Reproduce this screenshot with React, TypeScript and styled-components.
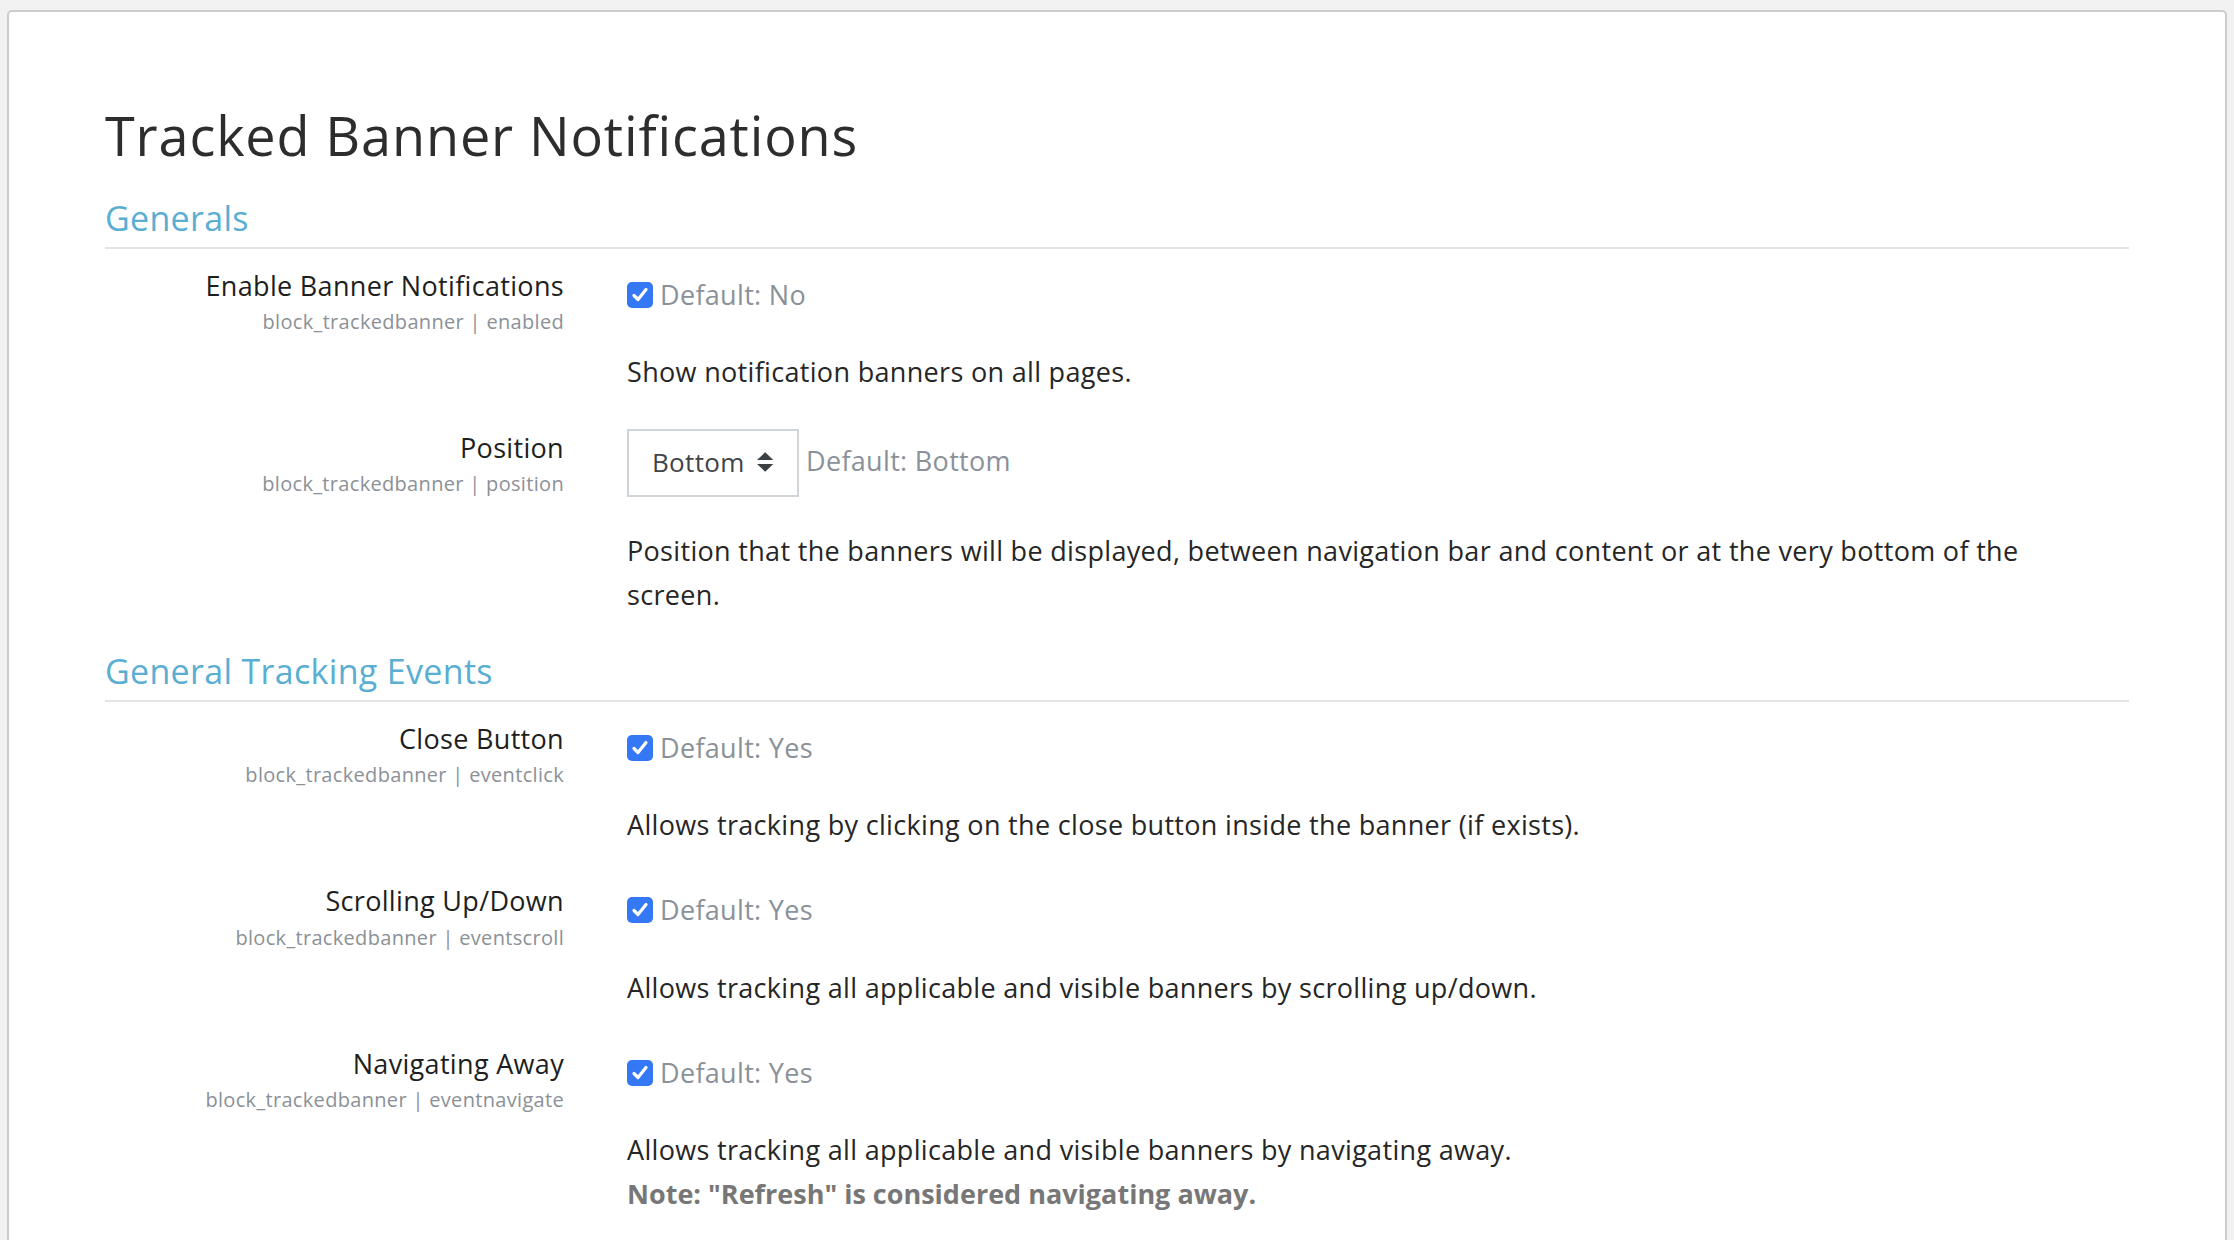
import styled, { createGlobalStyle } from 'styled-components';

const GlobalStyle = createGlobalStyle`
  html, body {
    margin: 0;
    padding: 0;
    background: #f2f2f2;
  }
  body {
    font-family: "Open Sans", Lato, "Liberation Sans", sans-serif;
    letter-spacing: 0.02em;
    color: #222;
  }
`;

const Card = styled.div`
  margin: 10px 7px 0 7px;
  min-height: 1240px;
  box-sizing: border-box;
  background: #fff;
  border: 2px solid #cccccc;
  border-bottom: none;
  border-radius: 5px 5px 0 0;
  padding: 91px 96px 0 96px;
`;

const Title = styled.h1`
  margin: 0;
  font-size: 54px;
  line-height: 1.2;
  font-weight: 400;
  letter-spacing: 0.016em;
  color: #2d2d2d;
`;

const SectionTitle = styled.h3<{ $first?: boolean }>`
  margin: ${(p) => (p.$first ? '30px' : '34px')} 0 0 0;
  padding-bottom: 8px;
  border-bottom: 2px solid #e4e4e4;
  font-size: 34px;
  line-height: 1.2;
  font-weight: 400;
  color: #5aaed2;
`;

const Rows = styled.div`
  display: flex;
  flex-direction: column;
  gap: 35px;
  margin-top: 18px;
`;

const Row = styled.div`
  display: grid;
  grid-template-columns: 459px 1fr;
  column-gap: 63px;
`;

const LabelCol = styled.div`
  padding-top: 3px;
  text-align: right;
`;

const Label = styled.div`
  font-size: 27px;
  line-height: 1.2;
  color: #1e1e1e;
`;

const Key = styled.div`
  margin-top: 8px;
  font-size: 20px;
  line-height: 1.2;
  color: #8b9197;
`;

const ContentCol = styled.div<{ $offset: number }>`
  padding-top: ${(p) => p.$offset}px;
`;

const ControlLine = styled.div`
  display: flex;
  align-items: center;
  gap: 7px;
`;

const DefaultText = styled.span<{ $raise?: number }>`
  padding-bottom: ${(p) => p.$raise ?? 0}px;
  font-size: 27px;
  line-height: 1.2;
  color: #8a9198;
`;

const CheckBox = styled.span`
  display: inline-flex;
  align-items: center;
  justify-content: center;
  width: 26px;
  height: 26px;
  border-radius: 5px;
  background: #3478f6;
  flex-shrink: 0;
  svg {
    width: 20px;
    height: 20px;
  }
`;

const Select = styled.div`
  display: flex;
  align-items: center;
  gap: 12px;
  box-sizing: border-box;
  width: 172px;
  height: 68px;
  padding: 0 24px 2px 23px;
  border: 2px solid #cfd4d9;
  font-size: 26px;
  color: #3f4449;
  svg {
    margin-left: auto;
    width: 17px;
    height: 20px;
  }
`;

const Description = styled.p<{ $gap: number }>`
  margin: ${(p) => p.$gap}px 0 0 0;
  max-width: 1470px;
  font-size: 27px;
  line-height: 44px;
  color: #262626;
`;

const Note = styled.strong`
  display: block;
  color: #777;
  font-weight: 700;
  letter-spacing: 0;
`;

function Check() {
  return (
    <CheckBox>
      <svg viewBox="0 0 20 20" fill="none">
        <path
          d="M4 10.5 L8 14.5 L16 4.5"
          stroke="#fff"
          strokeWidth="3.2"
          strokeLinecap="round"
          strokeLinejoin="round"
        />
      </svg>
    </CheckBox>
  );
}

function SortArrows() {
  return (
    <svg viewBox="0 0 17 20">
      <path d="M8.5 0 L17 8 H0 Z" fill="#3a3f44" />
      <path d="M0 12 H17 L8.5 20 Z" fill="#3a3f44" />
    </svg>
  );
}

interface Setting {
  name: string;
  field: string;
  defaultLabel: string;
  text: string;
  note?: string;
}

const generalTracking: Setting[] = [
  {
    name: 'Close Button',
    field: 'eventclick',
    defaultLabel: 'Default: Yes',
    text: 'Allows tracking by clicking on the close button inside the banner (if exists).',
  },
  {
    name: 'Scrolling Up/Down',
    field: 'eventscroll',
    defaultLabel: 'Default: Yes',
    text: 'Allows tracking all applicable and visible banners by scrolling up/down.',
  },
  {
    name: 'Navigating Away',
    field: 'eventnavigate',
    defaultLabel: 'Default: Yes',
    text: 'Allows tracking all applicable and visible banners by navigating away.',
    note: 'Note: "Refresh" is considered navigating away.',
  },
];

function CheckboxRow({ name, field, defaultLabel, text, note }: Setting) {
  return (
    <Row>
      <LabelCol>
        <Label>{name}</Label>
        <Key>block_trackedbanner | {field}</Key>
      </LabelCol>
      <ContentCol $offset={12}>
        <ControlLine>
          <Check />
          <DefaultText>{defaultLabel}</DefaultText>
        </ControlLine>
        <Description $gap={39}>
          {text}
          {note && <Note>{note}</Note>}
        </Description>
      </ContentCol>
    </Row>
  );
}

export default function App() {
  return (
    <>
      <GlobalStyle />
      <Card>
        <Title>Tracked Banner Notifications</Title>

        <SectionTitle $first>Generals</SectionTitle>
        <Rows>
          <CheckboxRow
            name="Enable Banner Notifications"
            field="enabled"
            defaultLabel="Default: No"
            text="Show notification banners on all pages."
          />
          <Row>
            <LabelCol>
              <Label>Position</Label>
              <Key>block_trackedbanner | position</Key>
            </LabelCol>
            <ContentCol $offset={0}>
              <ControlLine>
                <Select>
                  Bottom
                  <SortArrows />
                </Select>
                <DefaultText $raise={4}>Default: Bottom</DefaultText>
              </ControlLine>
              <Description $gap={32}>
                Position that the banners will be displayed, between navigation bar and
                content or at the very bottom of the screen.
              </Description>
            </ContentCol>
          </Row>
        </Rows>

        <SectionTitle>General Tracking Events</SectionTitle>
        <Rows>
          {generalTracking.map((s) => (
            <CheckboxRow key={s.field} {...s} />
          ))}
        </Rows>
      </Card>
    </>
  );
}
